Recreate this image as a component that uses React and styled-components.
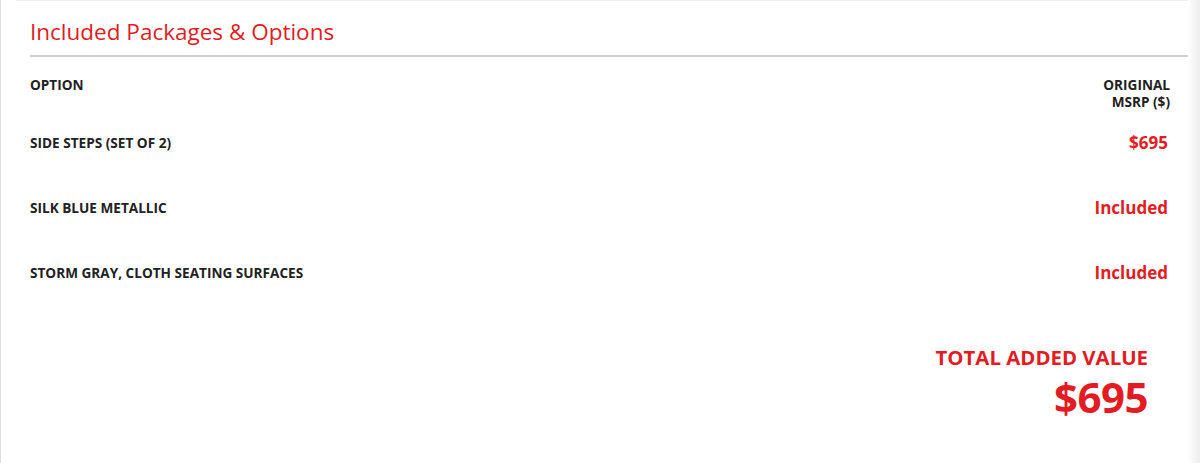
import React from 'react'
import styled, { createGlobalStyle } from 'styled-components'

const GlobalStyle = createGlobalStyle`
  html, body {
    margin: 0;
    padding: 0;
    background: #fff;
  }
  body {
    font-family: "Open Sans", "Liberation Sans", Arial, sans-serif;
    color: #222;
  }
`

const Page = styled.div`
  height: 463px;
  box-sizing: border-box;
  border-left: 1px solid #dcdcdc;
  background: linear-gradient(to right, #fff 0, #fff 1187px, #f7f7f7 1192px, #ececec 1200px);
`

const Card = styled.section`
  margin-left: 15px;
  width: 1172px;
  height: 100%;
  box-sizing: border-box;
  border-top: 1px solid #f0f0f0;
  padding: 0 0 0 14px;
`

const Title = styled.h2`
  margin: 0;
  padding-top: 16px;
  padding-bottom: 8px;
  font-size: 22.5px;
  font-weight: 400;
  line-height: 30px;
  color: #e31b23;
  border-bottom: 2px solid #cfcfcf;
`

const Table = styled.div`
  display: flex;
  flex-direction: column;
  padding-right: 18px;
  padding-top: 19px;
`

const Row = styled.div`
  display: flex;
  justify-content: space-between;
  align-items: ${p => (p.$head ? 'flex-start' : 'center')};
  height: ${p => (p.$head ? '34px' : '66px')};
  ${p => !p.$head && 'margin-top: -1px;'}
`

const Label = styled.span`
  font-size: 13.6px;
  font-weight: 700;
  line-height: 17px;
  text-transform: uppercase;
  color: #222;
`

const HeadRight = styled(Label)`
  text-align: right;
`

const Value = styled.span`
  font-size: 17px;
  font-weight: 700;
  padding-right: 2px;
  color: #e31b23;
`

const Total = styled.div`
  display: flex;
  flex-direction: column;
  align-items: flex-end;
  padding-right: 40px;
  margin-top: 39px;
  color: #e31b23;
  font-weight: 700;
  text-transform: uppercase;
`

const TotalLabel = styled.div`
  font-size: 20.4px;
  line-height: 26px;
`

const TotalAmount = styled.div`
  font-size: 42px;
  line-height: 54px;
  letter-spacing: -0.5px;
`

const options = [
  { name: 'Side Steps (Set of 2)', value: '$695' },
  { name: 'Silk Blue Metallic', value: 'Included' },
  { name: 'Storm Gray, Cloth Seating Surfaces', value: 'Included' }
]

export default function App() {
  return (
    <>
      <GlobalStyle />
      <Page>
        <Card>
          <Title>Included Packages &amp; Options</Title>
          <Table>
            <Row $head>
              <Label>Option</Label>
              <HeadRight>Original<br />MSRP ($)</HeadRight>
            </Row>
            {options.map(o => (
              <Row key={o.name}>
                <Label>{o.name}</Label>
                <Value>{o.value}</Value>
              </Row>
            ))}
          </Table>
          <Total>
            <TotalLabel>Total Added Value</TotalLabel>
            <TotalAmount>$695</TotalAmount>
          </Total>
        </Card>
      </Page>
    </>
  )
}
